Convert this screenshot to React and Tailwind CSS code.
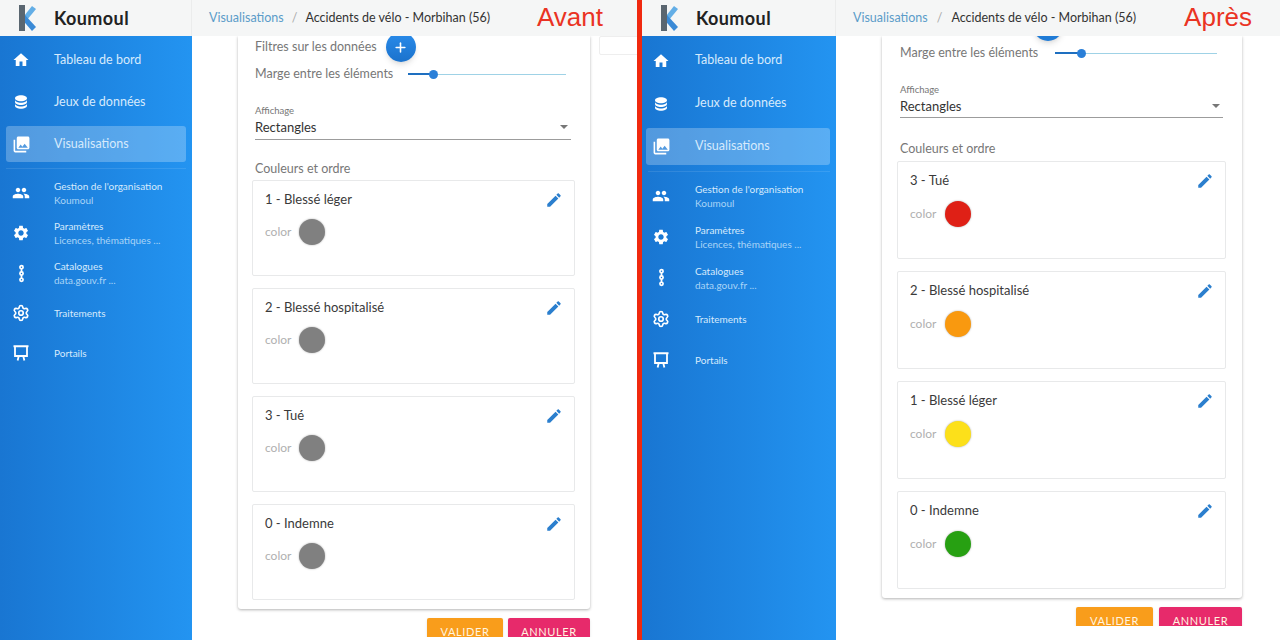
import { Plus, Settings } from 'lucide-react'

const P = {
  home: 'M10 20v-6h4v6h5v-8h3L12 3 2 12h3v8z',
  data: 'M12 3C7.58 3 4 4.79 4 7s3.58 4 8 4 8-1.79 8-4-3.58-4-8-4M4 9v3c0 2.21 3.58 4 8 4s8-1.79 8-4V9c0 2.21-3.58 4-8 4s-8-1.79-8-4m0 5v3c0 2.21 3.58 4 8 4s8-1.79 8-4v-3c0 2.21-3.58 4-8 4s-8-1.79-8-4z',
  photos: 'M22 16V4c0-1.1-.9-2-2-2H8c-1.1 0-2 .9-2 2v12c0 1.1.9 2 2 2h12c1.1 0 2-.9 2-2zm-11-4l2.03 2.71L16 11l4 5H8l3-4zM2 6v14c0 1.1.9 2 2 2h14v-2H4V6H2z',
  people: 'M16 11c1.66 0 2.99-1.34 2.99-3S17.66 5 16 5c-1.66 0-3 1.34-3 3s1.34 3 3 3zm-8 0c1.66 0 2.99-1.34 2.99-3S9.66 5 8 5C6.34 5 5 6.34 5 8s1.34 3 3 3zm0 2c-2.33 0-7 1.17-7 3.5V19h14v-2.5c0-2.33-4.67-3.5-7-3.5zm8 0c-.29 0-.62.02-.97.05 1.16.84 1.97 1.97 1.97 3.45V19h6v-2.5c0-2.33-4.67-3.5-7-3.5z',
  settings: 'M19.14 12.94c.04-.3.06-.61.06-.94 0-.32-.02-.64-.07-.94l2.03-1.58c.18-.14.23-.41.12-.61l-1.92-3.32c-.12-.22-.37-.29-.59-.22l-2.39.96c-.5-.38-1.03-.7-1.62-.94l-.36-2.54c-.04-.24-.24-.41-.48-.41h-3.84c-.24 0-.43.17-.47.41l-.36 2.54c-.59.24-1.13.57-1.62.94l-2.39-.96c-.22-.08-.47 0-.59.22L2.74 8.87c-.12.21-.08.47.12.61l2.03 1.58c-.05.3-.09.63-.09.94s.02.64.07.94l-2.03 1.58c-.18.14-.23.41-.12.61l1.92 3.32c.12.22.37.29.59.22l2.39-.96c.5.38 1.03.7 1.62.94l.36 2.54c.05.24.24.41.48.41h3.84c.24 0 .44-.17.47-.41l.36-2.54c.59-.24 1.13-.56 1.62-.94l2.39.96c.22.08.47 0 .59-.22l1.92-3.32c.12-.22.07-.47-.12-.61l-2.01-1.58zM12 15.6c-1.98 0-3.6-1.62-3.6-3.6s1.62-3.6 3.6-3.6 3.6 1.62 3.6 3.6-1.62 3.6-3.6 3.6z',
  edit: 'M3 17.25V21h3.75L17.81 9.94l-3.75-3.75L3 17.25zM20.71 7.04c.39-.39.39-1.02 0-1.41l-2.34-2.34c-.39-.39-1.02-.39-1.41 0l-1.83 1.83 3.75 3.75 1.83-1.83z',
}

const Icon = ({ d, className }) => (
  <svg viewBox="0 0 24 24" fill="currentColor" className={className}><path d={d} /></svg>
)

const CatalogIcon = () => (
  <svg viewBox="0 0 24 24" fill="none" stroke="currentColor" strokeWidth="2.2" className="w-[19px] h-[19px]">
    <circle cx="12" cy="4" r="2" />
    <circle cx="12" cy="12" r="2" />
    <circle cx="12" cy="20" r="2" />
    <path d="M12 6v4M12 14v4" />
  </svg>
)

const EaselIcon = () => (
  <svg viewBox="0 0 24 24" fill="none" stroke="currentColor" strokeWidth="2.4" className="w-[18px] h-[18px]">
    <path d="M2 3h20M4 3v13h16V3M9 16l-1.5 6M15 16l1.5 6" />
  </svg>
)

const NAV = [
  { label: 'Tableau de bord', icon: <Icon d={P.home} className="w-[18px] h-[18px]" /> },
  { label: 'Jeux de données', icon: <Icon d={P.data} className="w-[18px] h-[18px]" /> },
  { label: 'Visualisations', icon: <Icon d={P.photos} className="w-[19px] h-[19px]" />, active: true },
]

const NAV_SUB = [
  { label: 'Gestion de l\'organisation', sub: 'Koumoul', icon: <Icon d={P.people} className="w-[18px] h-[18px]" /> },
  { label: 'Paramètres', sub: 'Licences, thématiques ...', icon: <Icon d={P.settings} className="w-[18px] h-[18px]" /> },
  { label: 'Catalogues', sub: 'data.gouv.fr ...', icon: <CatalogIcon /> },
  { label: 'Traitements', icon: <Settings size={18} strokeWidth={2.2} /> },
  { label: 'Portails', icon: <EaselIcon /> },
]

const LEFT = {
  outer: 'w-[637px]',
  side: 'w-[192px]',
  labelBox: 'mr-[34px]',
  crumbSep: 'mx-[8px]',
  row: 'h-[42px]',
  subRow: 'h-[40px]',
  activeBox: 'mx-[6px] h-[36px] w-[180px]',
  activeIcon: 'w-[24px] ml-[3px] mr-[21px]',
  navIcon: 'w-[42px] mr-[12px]',
  divider: 'mt-[3px] mb-[4px]',
  main: 'h-[601px]',
  sheet: 'ml-[46px] w-[352px] pb-[9px]',
  form: 'pl-[17px] pr-[19px]',
  cards: 'ml-[14px] w-[323px] gap-[12px] pt-[2px]',
  card: 'h-[96px]',
  swatchRow: 'mt-[11px]',
  swatchGap: 'gap-[8px]',
  footer: 'ml-[235px] mt-[9px] gap-[5px]',
  valider: 'w-[76px]',
  annuler: 'w-[82px]',
  selectGap: 'mt-[21px]',
  valuePad: 'pb-[3px]',
  valueGap: 'mt-[1px]',
  colorGap: 'mt-[20px]',
  sliderW: 'w-[158px] ml-[15px]',
  thumb: 'w-[26px]',
  knob: 'left-[21px]',
}

const RIGHT = {
  outer: 'flex-1',
  side: 'w-[194px]',
  labelBox: 'mr-[28px]',
  crumbSep: 'mx-[9px]',
  row: 'h-[43px]',
  subRow: 'h-[41px]',
  activeBox: 'mx-[4px] h-[37px] w-[184px]',
  activeIcon: 'w-[24px] ml-[3px] mr-[22px]',
  navIcon: 'w-[38px] mr-[15px]',
  divider: 'mt-[3px] mb-[3px]',
  main: 'h-[590px]',
  sheet: 'ml-[46px] w-[360px] pb-[9px]',
  form: 'pl-[18px] pr-[19px]',
  cards: 'ml-[15px] w-[329px] gap-[12px] pt-[3px]',
  card: 'h-[98px]',
  swatchRow: 'mt-[12px]',
  swatchGap: 'gap-[9px]',
  footer: 'ml-[240px] mt-[9px] gap-[6px]',
  valider: 'w-[77px]',
  annuler: 'w-[83px]',
  selectGap: 'mt-[21px]',
  valuePad: 'pb-[2px]',
  valueGap: 'mt-[1px]',
  colorGap: 'mt-[22px]',
  sliderW: 'w-[162px] ml-[17px]',
  thumb: 'w-[27px]',
  knob: 'left-[22px]',
}

function Logo() {
  return (
    <svg viewBox="0 0 17 26" className="w-[17px] h-[26px]">
      <path d="M5 11 L13 1 L17 4 L8 15 Z" fill="#63aee6" />
      <path d="M1 12 L5 9 L17 22 L13 26 Z" fill="#3a8ad6" />
      <rect x="0" y="0" width="6" height="26" fill="#5a6670" />
    </svg>
  )
}

function Header({ v, label }) {
  return (
    <div className="flex h-[36px] shrink-0 items-center bg-[#f5f6f6]">
      <div className={`${v.side} h-full flex items-center shrink-0 border-r border-[#ebecec]`}>
        <div className="ml-[19px] w-[35px]"><Logo /></div>
        <span className="text-[18px] font-bold text-[#222] tracking-[0.4px]">Koumoul</span>
      </div>
      <div className="pl-[17px] flex items-center text-[12.5px]">
        <span className="text-[#5b9cc9]">Visualisations</span>
        <span className={`${v.crumbSep} text-[#aaa]`}>/</span>
        <span className="text-[#333]">Accidents de vélo - Morbihan (56)</span>
      </div>
      <span className={`${v.labelBox} ml-auto -mt-[3px] text-[26px] leading-none text-[#ea3323] [font-family:'Liberation_Sans',sans-serif]`}>{label}</span>
    </div>
  )
}

function Sidebar({ v }) {
  return (
    <aside className={`${v.side} pt-[3px] shrink-0 bg-gradient-to-r from-[#1976d2] to-[#2394f1] text-white`}>
      {NAV.map(item => (
        <div key={item.label} className={`${v.row} flex items-center`}>
          <div className={`flex items-center ${item.active ? `${v.activeBox} rounded-[3px] bg-white/25` : 'w-full'}`}>
            <span className={`flex justify-center shrink-0 ${item.active ? v.activeIcon : v.navIcon}`}>{item.icon}</span>
            <span className="text-[12.5px] text-[#d6eafc]">{item.label}</span>
          </div>
        </div>
      ))}
      <div className={`${v.divider} mx-[6px] h-px bg-white/10`} />
      {NAV_SUB.map(item => (
        <div key={item.label} className={`${v.subRow} flex items-center`}>
          <span className={`flex justify-center shrink-0 ${v.navIcon}`}>{item.icon}</span>
          <div className="min-w-0 leading-[14px]">
            <div className="text-[10px] text-[#d6eafc] whitespace-nowrap">{item.label}</div>
            {item.sub && <div className="text-[10px] text-[#a9d4f7] whitespace-nowrap">{item.sub}</div>}
          </div>
        </div>
      ))}
    </aside>
  )
}

function Slider({ v }) {
  return (
    <div className={`${v.sliderW} relative h-[10px] flex items-center`}>
      <div className={`${v.thumb} h-[2px] bg-[#1e6fc0]`} />
      <div className="flex-1 h-px bg-[#9fd2e6]" />
      <div className={`${v.knob} absolute top-[0.5px] w-[9px] h-[9px] rounded-full bg-[#2a7fd8]`} />
    </div>
  )
}

function ColorCard({ v, title, color }) {
  return (
    <div className={`${v.card} border border-[#e8e9ea] rounded-[2px] pl-[12px] pr-[11px] pt-[10px]`}>
      <div className="flex items-center justify-between h-[17px]">
        <span className="text-[13px] text-[#3a3a3a]">{title}</span>
        <Icon d={P.edit} className="w-[18px] h-[18px] text-[#2b7fce]" />
      </div>
      <div className={`${v.swatchRow} ${v.swatchGap} flex items-center h-[26px]`}>
        <span className="text-[12px] text-[#b0b0b0]">color</span>
        <span className={`w-[26px] h-[26px] rounded-full shadow-[0_0_2px_rgba(0,0,0,0.35)] ${color}`} />
      </div>
    </div>
  )
}

function Footer({ v }) {
  return (
    <div className={`${v.footer} flex text-[11px] tracking-[0.6px] text-[#fff4e0]`}>
      <button className={`${v.valider} h-[28px] rounded-[2px] bg-[#f99d1b] shadow-sm`}>VALIDER</button>
      <button className={`${v.annuler} h-[28px] rounded-[2px] bg-[#e72a6b] shadow-sm`}>ANNULER</button>
    </div>
  )
}

function Panel({ v, label, cards, showFilters }) {
  return (
    <section className={`${v.outer} flex flex-col h-[640px] overflow-hidden`}>
      <Header v={v} label={label} />
      <div className="flex flex-1 min-h-0">
        <Sidebar v={v} />
        <main className="flex-1 min-w-0 bg-white">
          <div className={`${v.main} overflow-hidden`}>
            <div className="flex items-start">
              <div className={`${v.sheet} shrink-0 bg-white rounded-b-[3px] shadow-[0_1px_3px_rgba(0,0,0,0.3)]`}>
                <div className={v.form}>
                  {showFilters ? (
                    <div className="flex items-center h-[22px] text-[12.5px] text-[#777]">
                      Filtres sur les données
                      <span className="ml-[9px] flex items-center justify-center w-[30px] h-[30px] shrink-0 rounded-full bg-gradient-to-b from-[#2a8ceb] to-[#1b72cc] text-white shadow-md">
                        <Plus size={15} strokeWidth={2.5} />
                      </span>
                    </div>
                  ) : (
                    <div className="h-[7px] relative">
                      <span className="absolute -top-[25px] left-[133px] w-[30px] h-[30px] rounded-full bg-[#1f7bd6] shadow-md" />
                    </div>
                  )}
                  <div className={`${showFilters ? 'mt-[6px]' : 'mt-0'} flex items-center h-[20px] text-[12.5px] text-[#777] whitespace-nowrap`}>
                    Marge entre les éléments
                    <Slider v={v} />
                  </div>
                  <div className={`${v.selectGap} ${v.valuePad} border-b border-[#9c9c9c]`}>
                    <div className="text-[9.5px] leading-[12px] text-[#777]">Affichage</div>
                    <div className={`${v.valueGap} flex items-center justify-between pr-[3px] text-[13px] leading-[18px] text-[#333]`}>
                      Rectangles
                      <span className="w-0 h-0 border-x-[4px] border-x-transparent border-t-[4px] border-t-[#777]" />
                    </div>
                  </div>
                  <div className={`${v.colorGap} text-[12.5px] leading-[18px] text-[#777]`}>Couleurs et ordre</div>
                </div>
                <div className={`${v.cards} flex flex-col`}>
                  {cards.map(c => <ColorCard key={c.title} v={v} {...c} />)}
                </div>
              </div>
              {showFilters && <div className="ml-[9px] w-[60px] h-[19px] shrink-0 border border-[#eeeeee] rounded-[2px]" />}
            </div>
            <Footer v={v} />
          </div>
        </main>
      </div>
    </section>
  )
}

const CARDS_BEFORE = [
  { title: '1 - Blessé léger', color: 'bg-[#808080]' },
  { title: '2 - Blessé hospitalisé', color: 'bg-[#808080]' },
  { title: '3 - Tué', color: 'bg-[#808080]' },
  { title: '0 - Indemne', color: 'bg-[#808080]' },
]

const CARDS_AFTER = [
  { title: '3 - Tué', color: 'bg-[#df2016]' },
  { title: '2 - Blessé hospitalisé', color: 'bg-[#f9990f]' },
  { title: '1 - Blessé léger', color: 'bg-[#fce01a]' },
  { title: '0 - Indemne', color: 'bg-[#27a012]' },
]

export default function App() {
  return (
    <div className="flex w-[1280px] h-[640px] overflow-hidden bg-white [font-family:'Lato','Noto_Sans',sans-serif]">
      <Panel v={LEFT} label="Avant" cards={CARDS_BEFORE} showFilters />
      <div className="w-[5px] shrink-0 bg-[#f0290f]" />
      <Panel v={RIGHT} label="Après" cards={CARDS_AFTER} />
    </div>
  )
}
